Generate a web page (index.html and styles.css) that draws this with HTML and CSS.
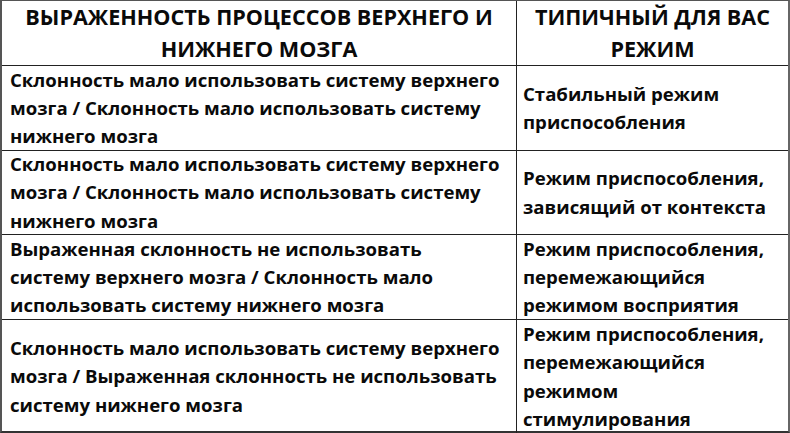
FILE: index.html
```html
<!DOCTYPE html>
<html lang="ru">
<head>
<meta charset="utf-8">
<title>Режимы</title>
<link rel="stylesheet" href="styles.css">
</head>
<body>
<div class="table">
  <div class="cell head left">ВЫРАЖЕННОСТЬ ПРОЦЕССОВ ВЕРХНЕГО И<br>НИЖНЕГО МОЗГА</div>
  <div class="cell head right">ТИПИЧНЫЙ ДЛЯ ВАС<br>РЕЖИМ</div>

  <div class="cell left">Склонность мало использовать систему верхнего<br>мозга / Склонность мало использовать систему<br>нижнего мозга</div>
  <div class="cell right">Стабильный режим<br>приспособления</div>

  <div class="cell left">Склонность мало использовать систему верхнего<br>мозга / Склонность мало использовать систему<br>нижнего мозга</div>
  <div class="cell right">Режим приспособления,<br>зависящий от контекста</div>

  <div class="cell left">Выраженная склонность не использовать<br>систему верхнего мозга / Склонность мало<br>использовать систему нижнего мозга</div>
  <div class="cell right">Режим приспособления,<br>перемежающийся<br>режимом восприятия</div>

  <div class="cell left last">Склонность мало использовать систему верхнего<br>мозга / Выраженная склонность не использовать<br>систему нижнего мозга</div>
  <div class="cell right last">Режим приспособления,<br>перемежающийся<br>режимом<br>стимулирования</div>
</div>
</body>
</html>
```
FILE: styles.css
```css
html, body {
  margin: 0;
  padding: 0;
  background: #ffffff;
}
.table {
  width: 790px;
  height: 433px;
  box-sizing: border-box;
  border-left: 2px solid #555;
  border-right: 2px solid #666;
  border-top: 1px solid #555;
  border-bottom: 2px solid #333;
  display: grid;
  grid-template-columns: 515px 1fr;
  grid-template-rows: 65px 85px 84px 85px 1fr;
  font-family: "Open Sans", "DejaVu Sans", sans-serif;
  font-weight: 700;
  color: #0a0a0a;
}
.cell {
  box-sizing: border-box;
  border-bottom: 1px solid #222;
  display: flex;
  flex-direction: column;
  justify-content: center;
  white-space: nowrap;
  font-size: 18.6px;
  line-height: 28.3px;
}
.cell.last {
  border-bottom: none;
}
.left {
  border-right: 1px solid #222;
  padding-left: 8px;
}
.right {
  padding-left: 6px;
}
.head {
  font-size: 21.6px;
  line-height: 32px;
  text-align: center;
  padding-left: 0;
}
```
